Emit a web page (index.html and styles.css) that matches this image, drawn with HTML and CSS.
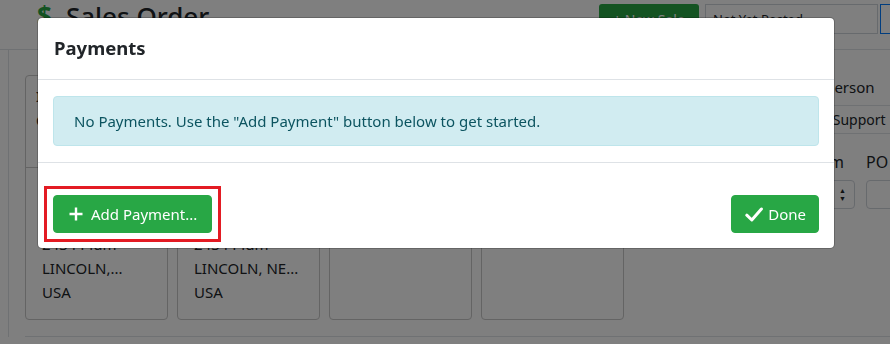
FILE: index.html
```html
<!DOCTYPE html>
<html lang="en">

<head>
     <meta charset="UTF-8">
     <meta name="viewport" content="width=device-width, initial-scale=1.0">
     <title>Sales Order - Payments</title>
     <link rel="stylesheet" href="styles.css">
</head>

<body>
     <div class="page">
          <div class="topbar">
               <h1 class="page-title"><span class="dollar">$</span>Sales Order</h1>
               <div class="top-actions">
                    <button class="btn-new">+ New Sale</button>
                    <div class="status-select">Not Yet Posted</div>
                    <div class="focus-box"></div>
               </div>
          </div>
          <div class="panel">
               <div class="panel-row">
                    <div class="cards">
                         <div class="addr-card">
                              <div class="addr-head">Invoice To<br>Customer</div>
                              <div class="addr-body">2434 Plum<br>LINCOLN,...<br>USA</div>
                         </div>
                         <div class="addr-card">
                              <div class="addr-head">Ship To<br>Customer</div>
                              <div class="addr-body">2434 Plum<br>LINCOLN, NE...<br>USA</div>
                         </div>
                         <div class="addr-card"></div>
                         <div class="addr-card"></div>
                    </div>
                    <div class="side">
                         <div class="side-label">Salesperson</div>
                         <div class="side-value">House Support</div>
                         <div class="side-grid">
                              <div class="side-label term">Term</div>
                              <div class="side-label">PO</div>
                              <div class="fake-select"><span class="arrows">&#9650;<br>&#9660;</span></div>
                              <div class="fake-input"></div>
                         </div>
                    </div>
               </div>
               <div class="rule"></div>
          </div>
     </div>

     <div class="backdrop"></div>

     <div class="modal">
          <div class="modal-header">
               <h5 class="modal-title">Payments</h5>
          </div>
          <div class="modal-body">
               <div class="alert-info">No Payments. Use the "Add Payment" button below to get started.</div>
          </div>
          <div class="modal-footer">
               <div class="highlight">
                    <button class="btn-green">
                         <svg class="icon" viewBox="0 0 14 14" width="14" height="14"><path d="M7 0.5v13M0.5 7h13" stroke="currentColor" stroke-width="2.4" fill="none"/></svg>
                         Add Payment...
                    </button>
               </div>
               <button class="btn-green btn-done">
                    <svg class="icon" viewBox="0 0 18 15" width="18" height="15"><path d="M1.8 8.2l5 4.8L16.4 2" stroke="currentColor" stroke-width="3" stroke-linecap="round" stroke-linejoin="round" fill="none"/></svg>
                    Done
               </button>
          </div>
     </div>
</body>

</html>
```

FILE: styles.css
```css
* {
     padding: 0;
     margin: 0;
     box-sizing: border-box;
     font-family: "Noto Sans", "Open Sans", sans-serif;
}

html,
body {
     width: 100%;
     height: 100%;
     overflow: hidden;
}

body {
     background: #fff;
     color: #212529;
     font-size: 15px;
     line-height: 24px;
}

/* page behind the dialog */

.topbar {
     display: flex;
     justify-content: space-between;
     height: 50px;
     border-bottom: 1px solid #dee2e6;
}

.page-title {
     font-size: 26px;
     font-weight: 500;
     line-height: 1.2;
     padding: 1px 0 0 37px;
     white-space: nowrap;
}

.dollar {
     color: #28a745;
     font-weight: 700;
     margin-right: 14px;
}

.top-actions {
     display: flex;
     padding-top: 4px;
     gap: 6px;
     height: 34px;
     margin-right: -4px;
}

.btn-new {
     width: 100px;
     height: 30px;
     background: #28a745;
     color: white;
     border: none;
     border-radius: 3px;
     font-size: 14px;
}

.status-select {
     width: 173px;
     height: 30px;
     border: 1px solid #ced4da;
     font-size: 13px;
     padding: 2px 7px;
}

.focus-box {
     width: 14px;
     height: 30px;
     border: 1px solid #007bff;
     border-right: none;
     margin-left: -4px;
}

.panel {
     margin-left: 8px;
     border-left: 1px solid #dee2e6;
     padding: 25px 0 0 16px;
}

.panel-row {
     display: flex;
     gap: 16px;
}

.cards {
     display: flex;
     gap: 9px;
}

.addr-card {
     width: 143px;
     height: 245px;
     border: 1px solid #c8c8c8;
     border-radius: 4px;
}

.addr-head {
     height: 92px;
     padding: 8px 10px;
     font-weight: 600;
     border-bottom: 1px solid #c8c8c8;
}

.addr-body {
     padding: 64px 16px 0;
     line-height: 24px;
     white-space: nowrap;
     overflow: hidden;
}

.side {
     flex: 1;
     padding-left: 149px;
     white-space: nowrap;
}

.side-value {
     margin: 6px 0 16px -43px;
     border-top: 1px solid #dee2e6;
     border-bottom: 1px solid #dee2e6;
     height: 29px;
     padding-left: 41px;
     font-size: 14px;
     line-height: 27px;
}

.side-grid {
     display: grid;
     grid-template-columns: 90px 40px;
     column-gap: 11px;
     row-gap: 6px;
     margin-left: -24px;
}

.side-grid .side-label {
     font-size: 16px;
}

.side-grid .term {
     text-align: right;
     padding-right: 11px;
}

.fake-select,
.fake-input {
     height: 29px;
     border: 1px solid #ced4da;
     border-radius: 4px;
}

.fake-select {
     text-align: right;
}

.arrows {
     display: inline-block;
     font-size: 7px;
     line-height: 8px;
     padding: 6px 8px 0 0;
}

.rule {
     margin-top: 16px;
     border-top: 1px solid #dee2e6;
}

/* dialog */

.backdrop {
     position: fixed;
     inset: 0;
     background: rgba(0, 0, 0, 0.5);
}

.modal {
     position: absolute;
     top: 17px;
     left: 37px;
     width: 798px;
     background: white;
     border-radius: 5px;
     border: 1px solid rgba(0, 0, 0, 0.2);
     background-clip: padding-box;
}

.modal-header {
     padding: 15px 16px 16px;
     border-bottom: 1px solid #dee2e6;
}

.modal-title {
     font-size: 18.5px;
     font-weight: 700;
     line-height: 30px;
}

.modal-body {
     padding: 16px 15px;
     border-bottom: 1px solid #dee2e6;
}

.alert-info {
     background: #d1ecf1;
     border: 1px solid #bee5eb;
     color: #0c5460;
     border-radius: 4px;
     padding: 12px 20px;
}

.modal-footer {
     display: flex;
     justify-content: space-between;
     align-items: center;
     padding: 23px 15px 6px 6px;
}

.highlight {
     border: 3px solid #e31b23;
     padding: 6px;
}

.btn-green {
     display: flex;
     align-items: center;
     gap: 8px;
     height: 38px;
     padding: 0 14px 0 15px;
     background: #28a745;
     color: white;
     border: 1px solid #28a745;
     border-radius: 4px;
     font-size: 15px;
}

.btn-done {
     gap: 5px;
     padding: 0 12px 0 13px;
}

.icon {
     display: block;
}
```
